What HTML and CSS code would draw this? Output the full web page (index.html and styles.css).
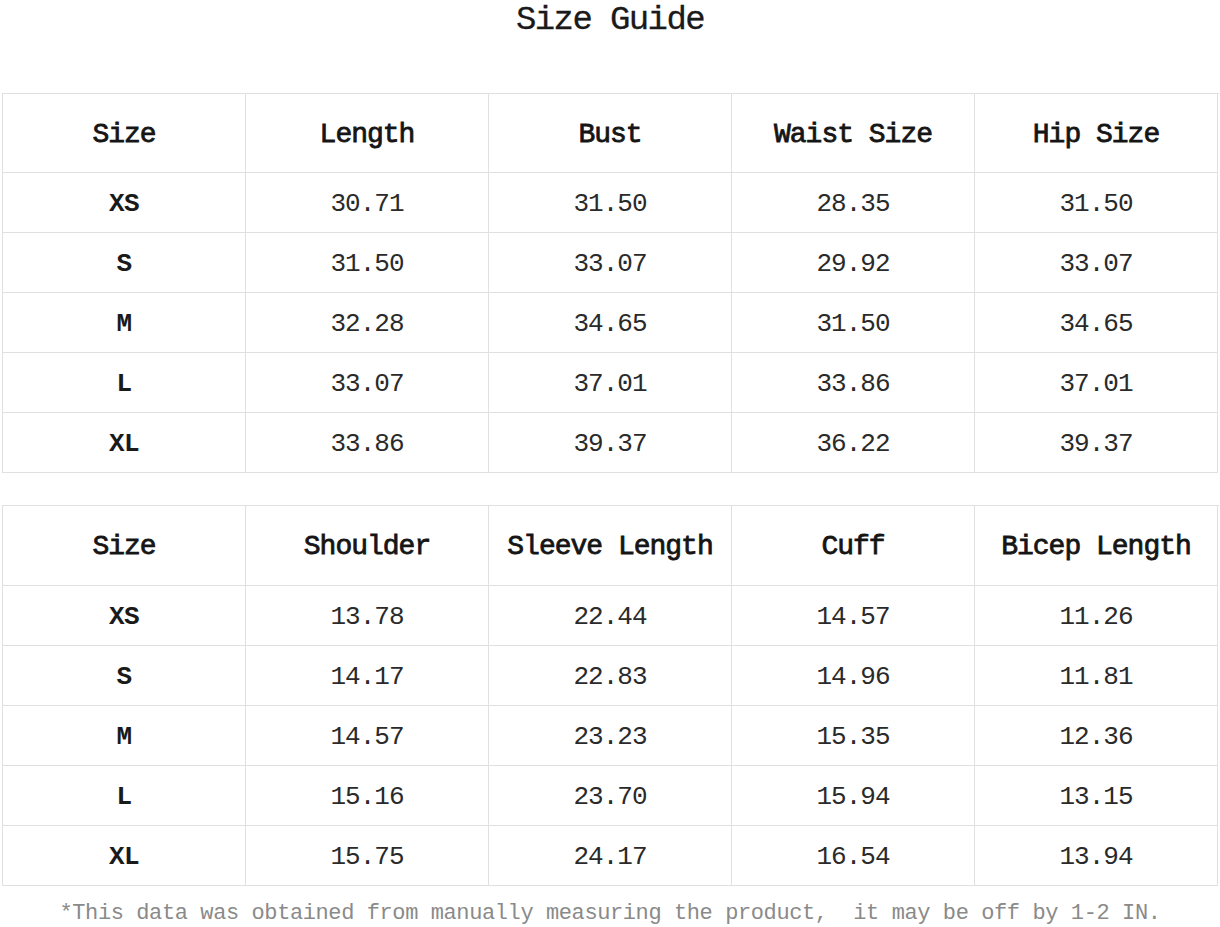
FILE: index.html
```html
<!DOCTYPE html>
<html>
<head>
<meta charset="utf-8">
<link rel="stylesheet" href="styles.css">
</head>
<body>
<div class="page">
  <h1 class="title">Size Guide</h1>
  <div class="grid">
    <div class="cell head">Size</div>
    <div class="cell head">Length</div>
    <div class="cell head">Bust</div>
    <div class="cell head">Waist Size</div>
    <div class="cell head">Hip Size</div>

    <div class="cell size">XS</div><div class="cell num">30.71</div><div class="cell num">31.50</div><div class="cell num">28.35</div><div class="cell num">31.50</div>
    <div class="cell size">S</div><div class="cell num">31.50</div><div class="cell num">33.07</div><div class="cell num">29.92</div><div class="cell num">33.07</div>
    <div class="cell size">M</div><div class="cell num">32.28</div><div class="cell num">34.65</div><div class="cell num">31.50</div><div class="cell num">34.65</div>
    <div class="cell size">L</div><div class="cell num">33.07</div><div class="cell num">37.01</div><div class="cell num">33.86</div><div class="cell num">37.01</div>
    <div class="cell size">XL</div><div class="cell num">33.86</div><div class="cell num">39.37</div><div class="cell num">36.22</div><div class="cell num">39.37</div>
  </div>

  <div class="grid second">
    <div class="cell head">Size</div>
    <div class="cell head">Shoulder</div>
    <div class="cell head">Sleeve Length</div>
    <div class="cell head">Cuff</div>
    <div class="cell head">Bicep Length</div>

    <div class="cell size">XS</div><div class="cell num">13.78</div><div class="cell num">22.44</div><div class="cell num">14.57</div><div class="cell num">11.26</div>
    <div class="cell size">S</div><div class="cell num">14.17</div><div class="cell num">22.83</div><div class="cell num">14.96</div><div class="cell num">11.81</div>
    <div class="cell size">M</div><div class="cell num">14.57</div><div class="cell num">23.23</div><div class="cell num">15.35</div><div class="cell num">12.36</div>
    <div class="cell size">L</div><div class="cell num">15.16</div><div class="cell num">23.70</div><div class="cell num">15.94</div><div class="cell num">13.15</div>
    <div class="cell size">XL</div><div class="cell num">15.75</div><div class="cell num">24.17</div><div class="cell num">16.54</div><div class="cell num">13.94</div>
  </div>

  <p class="note">*This data was obtained from manually measuring the product,&nbsp; it may be off by 1-2 IN.</p>
</div>
</body>
</html>
```

FILE: styles.css
```css
html, body {
  margin: 0;
  padding: 0;
  background: #ffffff;
}

.page {
  width: 1220px;
  height: 927px;
  overflow: hidden;
  font-family: "Liberation Mono", "DejaVu Sans Mono", monospace;
  color: #1a1a1a;
}

.title {
  margin: 0;
  height: 93px;
  box-sizing: border-box;
  padding-top: 2px;
  text-align: center;
  font-size: 34px;
  line-height: 36px;
  font-weight: normal;
  letter-spacing: -1.6px;
  color: #1a1a1a;
  -webkit-text-stroke: 0.3px #1a1a1a;
}

.grid {
  margin-left: 2px;
  width: 1216px;
  display: grid;
  grid-template-columns: repeat(5, 243px);
  grid-template-rows: 79px repeat(5, 60px);
  border-top: 1px solid #e0e0e0;
  border-left: 1px solid #e0e0e0;
}

.second {
  margin-top: 32px;
  grid-template-rows: 80px repeat(5, 60px);
}

.cell {
  box-sizing: border-box;
  padding-top: 3px;
  border-right: 1px solid #e0e0e0;
  border-bottom: 1px solid #e0e0e0;
  display: flex;
  align-items: center;
  justify-content: center;
  white-space: nowrap;
}

.head {
  padding-top: 2px;
  font-size: 28px;
  letter-spacing: -1px;
  font-weight: normal;
  color: #151515;
  -webkit-text-stroke: 0.8px #151515;
}

.size {
  font-size: 26px;
  letter-spacing: -0.6px;
  font-weight: bold;
  color: #1a1a1a;
}

.num {
  font-size: 26px;
  letter-spacing: -1px;
  font-weight: normal;
  color: #2a2a2a;
}

.note {
  margin: 0;
  padding-top: 15px;
  text-align: center;
  font-size: 22px;
  letter-spacing: -0.4px;
  line-height: 26px;
  color: #8a8a8a;
}
```
